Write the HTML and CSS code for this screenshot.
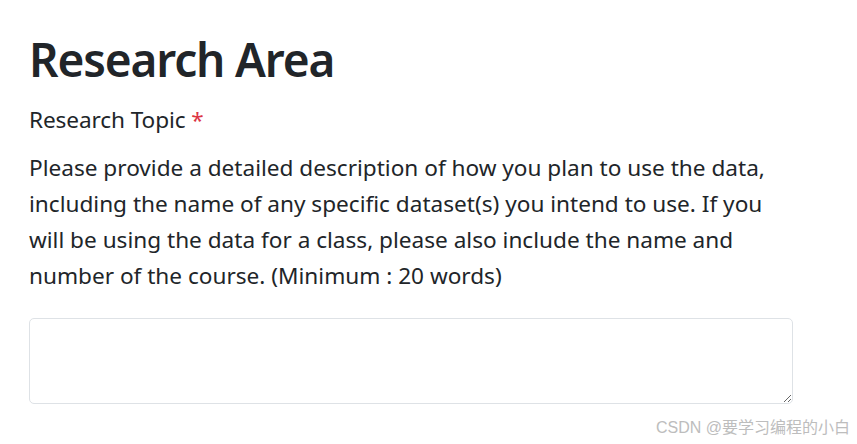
FILE: index.html
```html
<!DOCTYPE html>
<html>
<head>
<meta charset="utf-8">
<link rel="stylesheet" href="styles.css">
</head>
<body>
<main class="page">
  <h1 class="title">Research Area</h1>
  <label class="label" for="topic">Research Topic <span class="req">*</span></label>
  <p class="help">Please provide a detailed description of how you plan to use the data,<br>including the name of any specific dataset(s) you intend to use. If you<br>will be using the data for a class, please also include the name and<br>number of the course. (Minimum : 20 words)</p>
  <textarea id="topic" class="field"></textarea>
</main>
<div class="watermark">CSDN @要学习编程的小白</div>
</body>
</html>
```
FILE: styles.css
```css
html, body {
  margin: 0;
  padding: 0;
  background: #fff;
}
body {
  font-family: "Noto Sans", "Open Sans", sans-serif;
  color: #212529;
  overflow: hidden;
  height: 444px;
  position: relative;
}
.page {
  padding: 29px 0 0 29px;
  width: 764px;
  display: flex;
  flex-direction: column;
}
.title {
  margin: 0;
  font-size: 46px;
  font-weight: 600;
  line-height: 60px;
  letter-spacing: -1.15px;
}
.label {
  margin-top: 13px;
  font-size: 22.6px;
  line-height: 36px;
  letter-spacing: -0.1px;
}
.req {
  color: #dc3545;
}
.help {
  margin: 12px 0 0;
  font-size: 22.6px;
  line-height: 36px;
  white-space: nowrap;
}
.field {
  margin-top: 24px;
  height: 86px;
  width: 764px;
  box-sizing: border-box;
  border: 1px solid #dee2e6;
  border-radius: 5px;
  resize: vertical;
  font: inherit;
}
.watermark {
  position: absolute;
  right: 7px;
  bottom: 6px;
  font-family: "Liberation Sans", "Noto Sans CJK SC", sans-serif;
  font-size: 16px;
  color: #bdbdbd;
}
```
